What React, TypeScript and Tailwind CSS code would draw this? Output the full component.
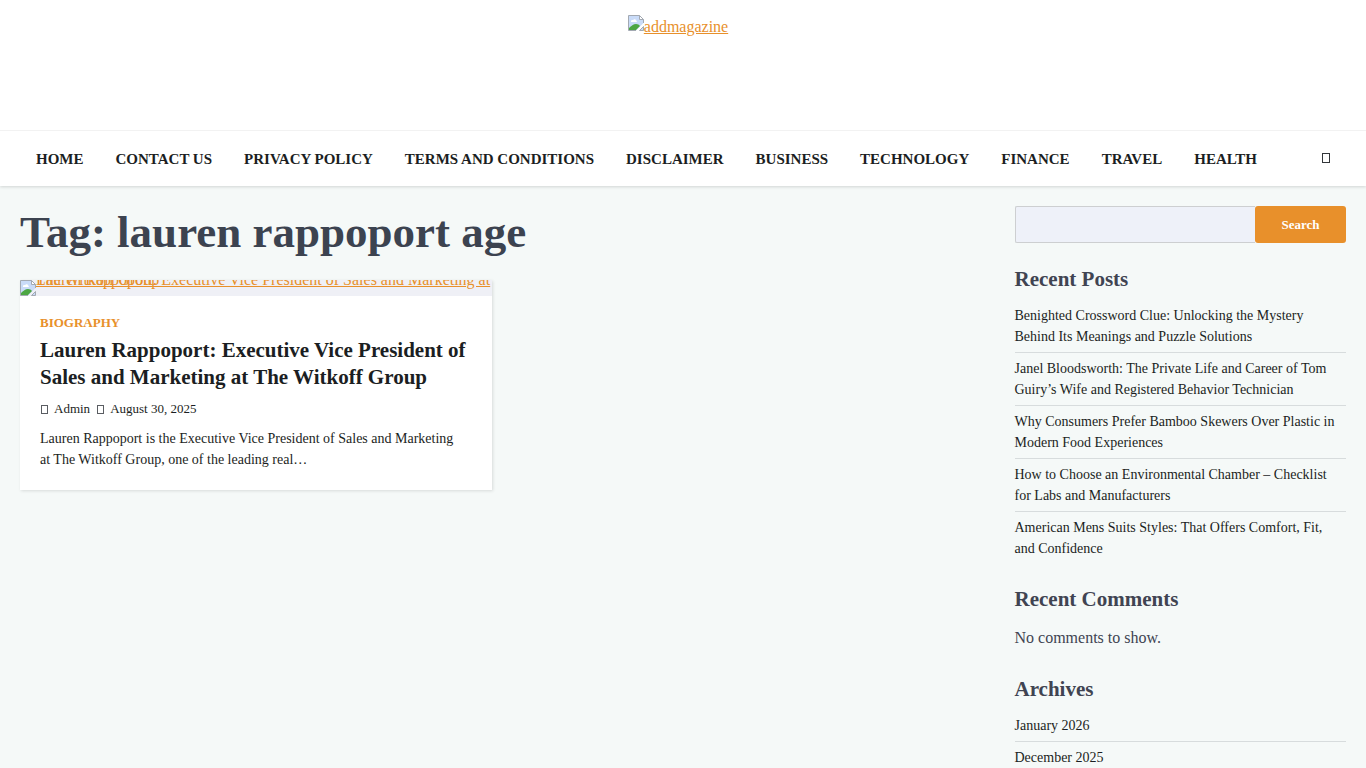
const menu = [
  "Home",
  "Contact Us",
  "Privacy Policy",
  "Terms and Conditions",
  "Disclaimer",
  "Business",
  "Technology",
  "Finance",
  "Travel",
  "Health",
]

const recentPosts = [
  "Benighted Crossword Clue: Unlocking the Mystery Behind Its Meanings and Puzzle Solutions",
  "Janel Bloodsworth: The Private Life and Career of Tom Guiry’s Wife and Registered Behavior Technician",
  "Why Consumers Prefer Bamboo Skewers Over Plastic in Modern Food Experiences",
  "How to Choose an Environmental Chamber – Checklist for Labs and Manufacturers",
  "American Mens Suits Styles: That Offers Comfort, Fit, and Confidence",
]

const archives = ["January 2026", "December 2025"]

function ImageIcon() {
  return (
    <svg className="h-4 w-4 shrink-0" viewBox="0 0 16 16" aria-hidden="true">
      <path d="M0.5 0.5H11.5L15.5 4.5V8L8 15.5H0.5Z" fill="#c9dbf8" />
      <path d="M3 7C2.6 5.4 4.2 4.8 5 5.2C5.8 3.8 8 4.2 8 5.6C9.2 5.6 9.2 7 8.2 7Z" fill="#fff" />
      <path d="M1 15V13C3.2 11 5.5 9 8 9C9.8 9 11.2 9.8 12 11L8 15Z" fill="#4da643" />
      <path d="M8 15.5H0.5V0.5H11.5L15.5 4.5V8" fill="none" stroke="#a3a9b2" />
      <path d="M11.5 0.5V4.5H15.5Z" fill="#fff" stroke="#a3a9b2" />
      <path d="M11.5 15.5L15.5 11.5V15.5Z" fill="#c9dbf8" stroke="#a3a9b2" />
    </svg>
  )
}

function LinkList({ items }: { items: string[] }) {
  return (
    <ul className="text-sm leading-[21px]">
      {items.map((item) => (
        <li key={item} className="border-b border-[#d7dcdd] py-[5px] last:border-b-0">
          <a href="#" className="text-[#1b1e22]">
            {item}
          </a>
        </li>
      ))}
    </ul>
  )
}

function WidgetTitle({ children }: { children: string }) {
  return <h2 className="mb-[7px] text-[21px] leading-7 font-bold">{children}</h2>
}

function MetaIcon() {
  return <span className="ml-px inline-block h-[9px] w-[7px] border border-[#5a5d62]" aria-hidden="true" />
}

export default function App() {
  return (
    <div className="min-h-screen bg-[#f5f9f8] font-['Liberation_Serif',serif] text-base text-[#404452]">
      <header className="bg-white shadow-[0_1px_3px_rgba(0,0,0,0.15)]">
        <div className="flex h-[130px] justify-center pt-[15px] pr-[10px]">
          <a href="#" className="flex items-start text-[#e8902b] underline">
            <ImageIcon />
            <span>addmagazine</span>
          </a>
        </div>
        <div className="flex items-start justify-between border-t border-[#f2f2f2] px-5">
          <nav className="flex text-[15px] leading-6 font-bold text-[#1b1e22] uppercase">
            {menu.map((item) => (
              <a key={item} href="#" className="px-4 pt-4 pb-[15px] whitespace-nowrap">
                {item}
              </a>
            ))}
          </nav>
          <button type="button" aria-label="Open search" className="flex px-4 pt-[22px] pb-4">
            <span className="h-[10px] w-2 border border-[#33363a]" />
          </button>
        </div>
      </header>

      <div className="flex px-5 pt-5">
        <main className="w-3/4 pr-5">
          <h1 className="mb-[22px] text-[45px] leading-[52px] font-bold text-[#3c4350]">Tag: lauren rappoport age</h1>
          <div className="grid grid-cols-2 gap-[30px]">
            <article className="bg-white shadow-[1px_1px_3px_rgba(0,0,0,0.12)]">
              <a href="#" className="flex h-4 overflow-hidden bg-[#eff0f6] text-[#e8902b] underline">
                <ImageIcon />
                {/* collapsed line height stacks the wrapped lines */}
                <span className="leading-[0px]">
                  Lauren Rappoport: Executive Vice President of Sales and Marketing at The Witkoff Group
                </span>
              </a>
              <div className="p-5">
                <a href="#" className="block text-[13px] leading-[14px] font-bold text-[#e8902b] uppercase">
                  Biography
                </a>
                <h2 className="mt-[7px] text-[21px] leading-[27px] font-bold text-[#1b1e22]">
                  <a href="#">Lauren Rappoport: Executive Vice President of Sales and Marketing at The Witkoff Group</a>
                </h2>
                <div className="mt-2 flex items-center gap-[6px] text-[13px] leading-5 text-[#1b1e22]">
                  <MetaIcon />
                  <a href="#">Admin</a>
                  <MetaIcon />
                  <a href="#">August 30, 2025</a>
                </div>
                <p className="mt-[9px] pr-2 text-sm leading-[21px] text-[#1b1e22]">
                  Lauren Rappoport is the Executive Vice President of Sales and Marketing at The Witkoff Group, one of
                  the leading real…
                </p>
              </div>
            </article>
          </div>
        </main>

        <aside className="w-1/4">
          <form className="mb-[22px] flex h-[37px]" onSubmit={(e) => e.preventDefault()}>
            <input
              type="search"
              aria-label="Search"
              className="min-w-0 flex-1 rounded-l-xs border border-r-0 border-[#cdcfd1] bg-[#eef1f9] px-3"
            />
            <button
              type="submit"
              className="w-[91px] rounded-[3px] bg-[#e8902b] text-center text-[13px] font-bold text-white"
            >
              Search
            </button>
          </form>

          <section className="mb-[21px]">
            <WidgetTitle>Recent Posts</WidgetTitle>
            <LinkList items={recentPosts} />
          </section>
          <section className="mb-[25px]">
            <WidgetTitle>Recent Comments</WidgetTitle>
            <p className="pt-[6px]">No comments to show.</p>
          </section>
          <section>
            <WidgetTitle>Archives</WidgetTitle>
            <LinkList items={archives} />
          </section>
        </aside>
      </div>
    </div>
  )
}
